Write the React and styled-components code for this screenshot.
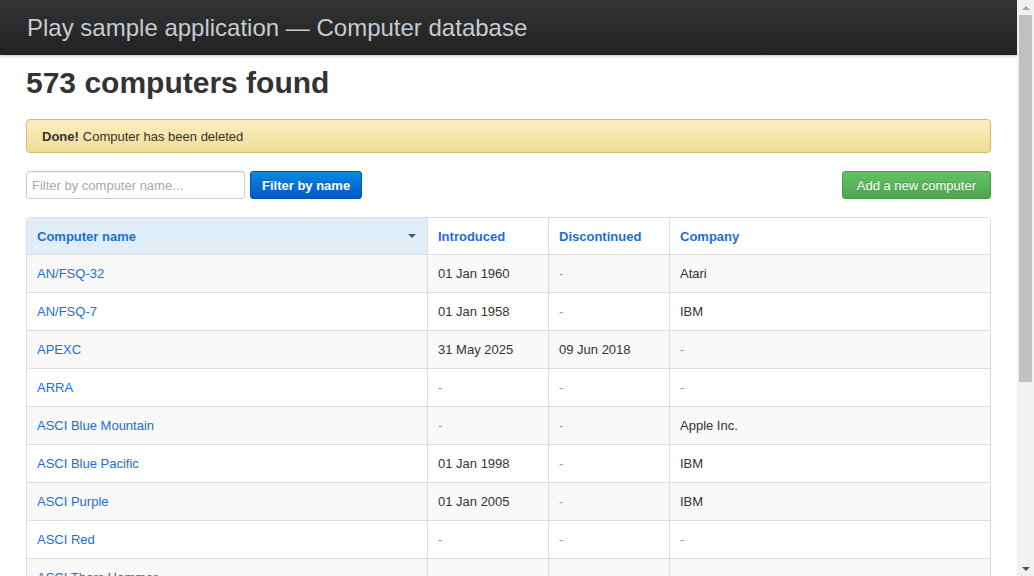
import React from "react";
import styled, { createGlobalStyle } from "styled-components";

const GlobalStyle = createGlobalStyle`
  html, body {
    margin: 0;
    padding: 0;
    background: #fff;
    font-family: "Liberation Sans", Arial, sans-serif;
    font-size: 13px;
    color: #333;
    overflow: hidden;
  }
  * { box-sizing: border-box; }
`;

const computers = [
  { name: "AN/FSQ-32", introduced: "01 Jan 1960", discontinued: null, company: "Atari" },
  { name: "AN/FSQ-7", introduced: "01 Jan 1958", discontinued: null, company: "IBM" },
  { name: "APEXC", introduced: "31 May 2025", discontinued: "09 Jun 2018", company: null },
  { name: "ARRA", introduced: null, discontinued: null, company: null },
  { name: "ASCI Blue Mountain", introduced: null, discontinued: null, company: "Apple Inc." },
  { name: "ASCI Blue Pacific", introduced: "01 Jan 1998", discontinued: null, company: "IBM" },
  { name: "ASCI Purple", introduced: "01 Jan 2005", discontinued: null, company: "IBM" },
  { name: "ASCI Red", introduced: null, discontinued: null, company: null },
  { name: "ASCI Thors Hammer", introduced: null, discontinued: null, company: null },
  { name: "ASCI White", introduced: "01 Jan 2001", discontinued: null, company: "IBM" },
];

const App = () => {
  return (
    <>
      <GlobalStyle />
      <Page>
        <TopBar>
          <Brand>Play sample application — Computer database</Brand>
        </TopBar>

        <Main>
          <Heading>573 computers found</Heading>

          <Alert>
            <strong>Done!</strong> Computer has been deleted
          </Alert>

          <Actions>
            <SearchForm>
              <SearchInput placeholder="Filter by computer name..." />
              <Button $variant="primary">Filter by name</Button>
            </SearchForm>
            <Button $variant="success">Add a new computer</Button>
          </Actions>

          <Table>
            <colgroup>
              <col style={{ width: 400 }} />
              <col style={{ width: 121 }} />
              <col style={{ width: 121 }} />
              <col />
            </colgroup>
            <thead>
              <tr>
                <HeadCell $sorted>
                  <HeadLink>Computer name</HeadLink>
                  <Caret />
                </HeadCell>
                <HeadCell>
                  <HeadLink>Introduced</HeadLink>
                </HeadCell>
                <HeadCell>
                  <HeadLink>Discontinued</HeadLink>
                </HeadCell>
                <HeadCell>
                  <HeadLink>Company</HeadLink>
                </HeadCell>
              </tr>
            </thead>
            <tbody>
              {computers.map((c, i) => (
                <Row key={c.name} $striped={i % 2 === 0}>
                  <Cell>
                    <NameLink href="#">{c.name}</NameLink>
                  </Cell>
                  <Cell>{c.introduced || <Empty>-</Empty>}</Cell>
                  <Cell>{c.discontinued || <Empty>-</Empty>}</Cell>
                  <Cell>{c.company || <Empty>-</Empty>}</Cell>
                </Row>
              ))}
            </tbody>
          </Table>

          <Pagination>
            <PageItem $disabled>← Previous</PageItem>
            <PageItem $current>Displaying 1 to 10 of 573</PageItem>
            <PageItem>Next →</PageItem>
          </Pagination>
        </Main>
      </Page>

      <ScrollBar>
        <ScrollArrow $dir="up" />
        <ScrollTrack>
          <ScrollThumb />
        </ScrollTrack>
        <ScrollArrow $dir="down" />
      </ScrollBar>
    </>
  );
};

const Page = styled.div`
  width: 1017px;
`;

const TopBar = styled.header`
  height: 55px;
  background: linear-gradient(to bottom, #333333, #222222);
  box-shadow: 0 1px 3px rgba(0, 0, 0, 0.25);
  display: flex;
  align-items: center;
  padding: 0 27px;
`;

const Brand = styled.h1`
  margin: 0;
  font-size: 24px;
  font-weight: 400;
  color: #c4cbd2;
`;

const Main = styled.main`
  padding: 10px 26px 40px;
`;

const Heading = styled.h2`
  margin: 0 0 18px;
  font-size: 30px;
  line-height: 36px;
  font-weight: 700;
  color: #333;
`;

const Alert = styled.div`
  height: 34px;
  display: flex;
  align-items: center;
  gap: 4px;
  padding: 0 15px;
  border: 1px solid #d3bd74;
  border-radius: 4px;
  background: linear-gradient(to bottom, #fbefc0, #f1dd98);
  color: #333;
  font-size: 13px;

  strong {
    font-weight: 700;
  }
`;

const Actions = styled.div`
  display: flex;
  justify-content: space-between;
  align-items: center;
  margin: 18px 0 18px;
`;

const SearchForm = styled.form`
  display: flex;
  gap: 5px;
`;

const SearchInput = styled.input`
  width: 219px;
  height: 28px;
  padding: 0 5px;
  border: 1px solid #ccc;
  border-radius: 3px;
  font-family: inherit;
  font-size: 13px;
  color: #555;
  box-shadow: inset 0 1px 1px rgba(0, 0, 0, 0.06);

  &::placeholder {
    color: #aaa;
  }
`;

const Button = styled.button`
  height: 28px;
  padding: 0 ${(p) => (p.$variant === "primary" ? "11px" : "14px")};
  border-radius: 3px;
  font-family: inherit;
  font-size: 13px;
  color: #fff;
  cursor: pointer;
  font-weight: ${(p) => (p.$variant === "primary" ? 700 : 400)};
  border: 1px solid ${(p) => (p.$variant === "primary" ? "#0055b3" : "#459945")};
  background: ${(p) =>
    p.$variant === "primary"
      ? "linear-gradient(to bottom, #0a8ae0, #0059c8)"
      : "linear-gradient(to bottom, #62c462, #51a351)"};
  text-shadow: 0 -1px 0 rgba(0, 0, 0, 0.2);
`;

const Table = styled.table`
  width: 100%;
  table-layout: fixed;
  border-collapse: separate;
  border-spacing: 0;
  border: 1px solid #ddd;
  border-radius: 4px;
  font-size: 13px;
`;

const HeadCell = styled.th`
  position: relative;
  height: 36px;
  padding: 0 10px;
  text-align: left;
  background: ${(p) => (p.$sorted ? "#e2eef7" : "#fff")};
  border-left: 1px solid #ddd;
  &:first-child {
    border-left: none;
    border-top-left-radius: 4px;
  }
`;

const HeadLink = styled.a`
  color: #1a6ed8;
  font-weight: 700;
  cursor: pointer;
`;

const Caret = styled.span`
  position: absolute;
  right: 11px;
  top: 16px;
  width: 0;
  height: 0;
  border-left: 4px solid transparent;
  border-right: 4px solid transparent;
  border-top: 4px solid #555;
`;

const Row = styled.tr`
  background: ${(p) => (p.$striped ? "#f9f9f9" : "#fff")};
`;

const Cell = styled.td`
  height: 38px;
  padding: 0 10px;
  border-top: 1px solid #ddd;
  border-left: 1px solid #ddd;
  color: #333;
  &:first-child {
    border-left: none;
  }
`;

const NameLink = styled.a`
  color: #1a6ed8;
  text-decoration: none;
`;

const Empty = styled.em`
  font-style: normal;
  color: #999;
`;

const Pagination = styled.ul`
  display: flex;
  justify-content: center;
  margin: 18px 0 0;
  padding: 0;
  list-style: none;
`;

const PageItem = styled.li`
  padding: 0 14px;
  line-height: 34px;
  border: 1px solid #ddd;
  border-left-width: 0;
  color: ${(p) => (p.$disabled || p.$current ? "#999" : "#1a6ed8")};
  background: ${(p) => (p.$current ? "#f5f5f5" : "#fff")};

  &:first-child {
    border-left-width: 1px;
    border-radius: 3px 0 0 3px;
  }
  &:last-child {
    border-radius: 0 3px 3px 0;
  }
`;

/* window scrollbar, drawn over the right edge */
const ScrollBar = styled.div`
  position: fixed;
  top: 0;
  right: 0;
  width: 17px;
  height: 100vh;
  background: #f1f1f1;
  display: flex;
  flex-direction: column;
`;

const ScrollArrow = styled.div`
  height: 15px;
  flex: none;
  display: flex;
  align-items: center;
  justify-content: center;

  &::before {
    content: "";
    width: 0;
    height: 0;
    border-left: 4px solid transparent;
    border-right: 4px solid transparent;
    ${(p) =>
      p.$dir === "up"
        ? "border-bottom: 4px solid #a3a3a3;"
        : "border-top: 4px solid #505050;"}
  }
`;

const ScrollTrack = styled.div`
  flex: 1;
  padding: 0 2px;
`;

const ScrollThumb = styled.div`
  height: 367px;
  background: #c1c1c1;
`;

export default App;
